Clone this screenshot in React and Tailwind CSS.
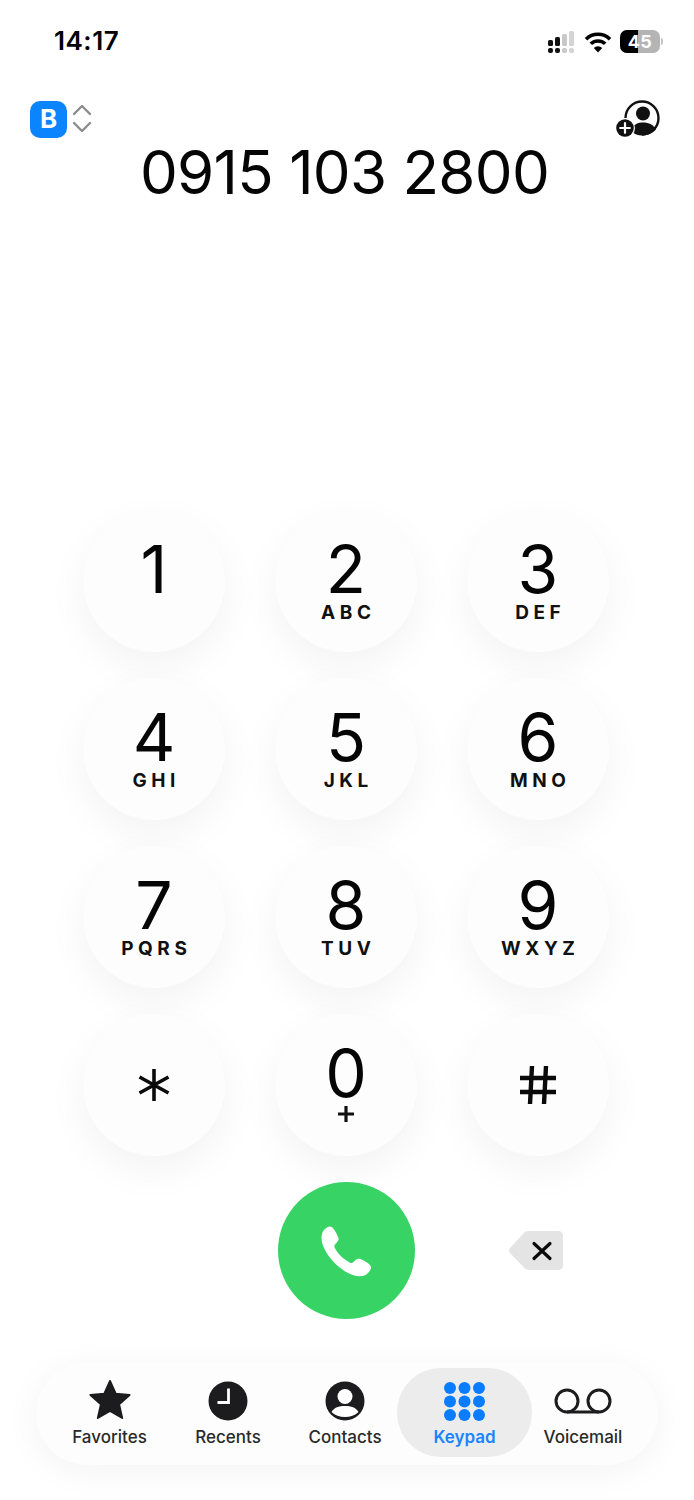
import React from "react";

const keys = [
  ["1", ""], ["2", "ABC"], ["3", "DEF"],
  ["4", "GHI"], ["5", "JKL"], ["6", "MNO"],
  ["7", "PQRS"], ["8", "TUV"], ["9", "WXYZ"],
];

function Key({ d, s }) {
  return (
    <div className="w-[142px] h-[142px] rounded-full bg-[#fdfdfd] shadow-[0_14px_40px_rgba(0,0,0,0.05)] flex flex-col items-center pt-[27px]">
      <div className="text-[66px] leading-[64px] h-[64px] font-normal text-[#050505]">{d}</div>
      {s && <div className="text-[19px] leading-[18px] mt-[3px] font-bold tracking-[0.24em] pl-[0.24em] text-[#111]">{s}</div>}
    </div>
  );
}

function Signal() {
  return (
    <svg width="28" height="22" viewBox="0 0 28 22">
      <rect x="0" y="9" width="5" height="6" rx="1.5" fill="#111" />
      <rect x="7" y="6" width="5" height="9" rx="1.5" fill="#111" />
      <rect x="14" y="3" width="5" height="12" rx="1.5" fill="#c8c8c8" />
      <rect x="21" y="0" width="5" height="15" rx="1.5" fill="#d4d4d4" />
      <rect x="0" y="17" width="5" height="5" rx="2" fill="#111" />
      <rect x="7" y="17" width="5" height="5" rx="2" fill="#111" />
      <rect x="14" y="17" width="5" height="5" rx="2" fill="#c8c8c8" />
      <rect x="21" y="17" width="5" height="5" rx="2" fill="#d4d4d4" />
    </svg>
  );
}

function Wifi() {
  return (
    <svg width="28" height="22" viewBox="0 0 28 22" fill="none" stroke="#000" strokeWidth="3.6">
      <path d="M2 8.2 A17 17 0 0 1 26 8.2" />
      <path d="M6.8 12.8 A10.5 10.5 0 0 1 21.2 12.8" />
      <path d="M14 21.5 L9.8 17 A6 6 0 0 1 18.2 17 Z" fill="#000" stroke="none" />
    </svg>
  );
}

function Battery() {
  return (
    <div className="flex items-center gap-[1px]">
      <div className="relative w-[40px] h-[23px] rounded-[7px] overflow-hidden bg-[#b4b4b4] flex items-center justify-center">
        <div className="absolute left-0 top-0 bottom-0 w-[18px] bg-black" />
        <span className="relative text-white text-[18px] leading-[22px] font-bold tracking-[0.02em]">45</span>
      </div>
      <div className="w-[2px] h-[7px] rounded-r bg-[#c4c4c4]" />
    </div>
  );
}

function AddContact() {
  return (
    <svg width="46" height="38" viewBox="0 0 46 38">
      <path d="M8.5 17 A16.5 16.5 0 1 1 25 33.5" fill="none" stroke="#111" strokeWidth="2.4" transform="translate(2,1)" />
      <circle cx="28" cy="13.5" r="7" fill="#111" />
      <path d="M16 31 C18 24 23 22.5 28 22.5 C34 22.5 38.5 25 41 29.5 C37.5 33 32.5 35.5 27 35.5 C23 35.5 19 34 16 31Z" fill="#111" />
      <circle cx="10" cy="28" r="10" fill="#fff" />
      <circle cx="10" cy="28" r="8.8" fill="#111" />
      <path d="M5.2 28 H14.8 M10 23.2 V32.8" stroke="#fff" strokeWidth="2.2" strokeLinecap="round" />
    </svg>
  );
}

function Tab({ label, active, children, w }) {
  return (
    <div className={`${w} h-[89px] flex flex-col items-center rounded-[44px] ${active ? "bg-[#ececec]" : ""}`}>
      <div className="h-[47px] mt-[11px] flex items-center justify-center">{children}</div>
      <div className={`mt-[1px] text-[17px] leading-[20px] font-medium ${active ? "text-[#1a85ff] font-semibold" : "text-[#2a2a2a]"}`}>{label}</div>
    </div>
  );
}

export default function App() {
  return (
    <div className="w-[694px] h-[1500px] bg-white flex flex-col overflow-hidden text-black font-['Inter',sans-serif]">
      {/* status bar */}
      <div className="h-[91px] flex items-start justify-between pl-[54px] pr-[31px] pt-[26px] shrink-0">
        <div className="text-[26px] leading-[30px] font-semibold tracking-[0.02em]">14:17</div>
        <div className="flex items-center gap-[8px] pt-[4px]">
          <Signal />
          <Wifi />
          <Battery />
        </div>
      </div>

      {/* top controls */}
      <div className="h-[56px] flex items-center justify-between pl-[30px] pr-[33px] shrink-0">
        <div className="flex items-center gap-[4px]">
          <div className="w-[37px] h-[37px] rounded-[10px] bg-[#0a84ff] text-white flex items-center justify-center text-[26px] font-bold leading-none">B</div>
          <svg width="22" height="32" viewBox="0 0 22 32" fill="none" stroke="#8c8c8c" strokeWidth="2.4" strokeLinecap="round" strokeLinejoin="round">
            <path d="M3 11 L11 3 L19 11" />
            <path d="M3 20 L11 28 L19 20" />
          </svg>
        </div>
        <AddContact />
      </div>

      {/* number */}
      <div className="h-[72px] shrink-0 flex items-start justify-center -mt-[10px] pr-[5px]">
        <div className="text-[60px] leading-[70px] font-normal tracking-[-0.012em] text-[#050505]">0915 103 2800</div>
      </div>

      {/* keypad */}
      <div className="mt-[301px] flex flex-col items-center gap-[26px] shrink-0 pr-[2px]">
        <div className="grid grid-cols-3 gap-x-[50px] gap-y-[26px] w-[526px]">
          {keys.map(([d, s]) => (
            <Key key={d} d={d} s={s} />
          ))}
          <div className="w-[142px] h-[142px] rounded-full bg-[#fdfdfd] shadow-[0_14px_40px_rgba(0,0,0,0.05)] flex items-center justify-center">
            <svg width="34" height="34" viewBox="0 0 34 34" stroke="#0a0a0a" strokeWidth="3.6">
              <path d="M17 1 V33 M2.5 9 L31.5 25 M31.5 9 L2.5 25" />
            </svg>
          </div>
          <div className="w-[142px] h-[142px] rounded-full bg-[#fdfdfd] shadow-[0_14px_40px_rgba(0,0,0,0.05)] flex flex-col items-center pt-[27px]">
            <div className="text-[66px] leading-[64px] h-[64px] font-normal text-[#050505]">0</div>
            <svg width="16" height="16" viewBox="0 0 16 16" className="mt-[1px]" stroke="#111" strokeWidth="3.2">
              <path d="M0 8 H16 M8 0 V16" />
            </svg>
          </div>
          <div className="w-[142px] h-[142px] rounded-full bg-[#fdfdfd] shadow-[0_14px_40px_rgba(0,0,0,0.05)] flex items-center justify-center">
            <svg width="38" height="40" viewBox="0 0 38 40" stroke="#0a0a0a" strokeWidth="4.4">
              <path d="M13 1 L11 39 M27 1 L25 39 M1 13 H37 M1 27 H37" />
            </svg>
          </div>
        </div>

        {/* call row */}
        <div className="w-[526px] grid grid-cols-3 gap-x-[50px] items-center">
          <div />
          <div className="w-[137px] h-[137px] rounded-full bg-[#38d365] flex items-center justify-center justify-self-center">
            <svg width="56" height="56" viewBox="0 0 52 52">
              <path d="M5.5 6.5 C8.5 3.5 11 2.5 13 4 C15 5.5 18 11 19 14 C19.7 16.5 17.5 18 15.6 20.2 C15 21 15 22 15.7 23.3 C18.5 29 24 34 29.7 36.8 C31 37.4 32 37.2 32.7 36.4 C34.8 34.3 36.4 32.6 38.8 33.3 C42 34.4 47 37.4 48.6 39.4 C50 41.4 49 44 46 47 C43.5 49.5 38.5 50.3 33 48.6 C21 44.6 9 33 4.4 20.5 C2.6 15 3 9.5 5.5 6.5 Z" fill="#fff" />
            </svg>
          </div>
          <div className="justify-self-center flex items-center justify-center pr-[4px]">
            <svg width="56" height="42" viewBox="0 0 56 42">
              <path d="M16 3 C17 1.5 18.5 1 20 1 H50 C53 1 55 3 55 6 V35 C55 38 53 40 50 40 H21 C19 40 17.5 39 16.5 38 L2 23 C0.8 21.5 0.8 19.5 2 18 Z" fill="#e4e4e4" />
              <path d="M26 13.5 L42 28.5 M42 13.5 L26 28.5" stroke="#0a0a0a" strokeWidth="3.2" strokeLinecap="round" />
            </svg>
          </div>
        </div>
      </div>

      {/* tab bar */}
      <div className="mt-[43px] mx-[36px] h-[103px] rounded-[52px] bg-[#fdfdfd] shadow-[0_6px_36px_rgba(0,0,0,0.05)] flex items-start pt-[6px] pl-[10px] shrink-0">
        <Tab label="Favorites" w="w-[127px]">
          <svg width="44" height="40" viewBox="0 0 46 42" className="-mt-[7px]">
            <path d="M23 2 L29 15.4 L43.6 16.8 L32.6 26.6 L35.8 41 L23 33.5 L10.2 41 L13.4 26.6 L2.4 16.8 L17 15.4 Z" fill="#1c1c1e" stroke="#1c1c1e" strokeWidth="2" strokeLinejoin="round" />
          </svg>
        </Tab>
        <Tab label="Recents" w="w-[110px]">
          <svg width="40" height="40" viewBox="0 0 40 40" className="-mt-[3px]">
            <circle cx="20" cy="20" r="19.5" fill="#1c1c1e" />
            <path d="M20.5 7.5 V21.5 H9.5" fill="none" stroke="#fff" strokeWidth="2.8" />
          </svg>
        </Tab>
        <Tab label="Contacts" w="w-[124px]">
          <svg width="40" height="40" viewBox="0 0 40 40" className="-mt-[3px]">
            <circle cx="20" cy="20" r="19.5" fill="#1c1c1e" />
            <circle cx="20" cy="15.5" r="7.5" fill="#fff" />
            <path d="M6.5 31 C9 26.5 14 25 20 25 C26 25 31 26.5 33.5 31 C30 34.5 25.5 36 20 36 C14.5 36 10 34.5 6.5 31Z" fill="#fff" />
          </svg>
        </Tab>
        <div className="-ml-[10px]">
          <Tab label="Keypad" active w="w-[135px]">
            <svg width="41" height="39" viewBox="0 0 41 39" fill="#0a7cff" className="-mt-[3px]">
              {[6, 19.5, 33].map((cy) =>
                [6, 20.5, 35].map((cx) => <circle key={`${cx}-${cy}`} cx={cx} cy={cy} r="6" />)
              )}
            </svg>
          </Tab>
        </div>
        <Tab label="Voicemail" w="w-[102px]">
          <svg width="58" height="26" viewBox="0 0 58 26" fill="none" stroke="#1c1c1e" strokeWidth="3" className="-mt-[3px]">
            <circle cx="13" cy="13" r="11" />
            <circle cx="45" cy="13" r="11" />
            <path d="M13 24 H45" />
          </svg>
        </Tab>
      </div>
    </div>
  );
}
